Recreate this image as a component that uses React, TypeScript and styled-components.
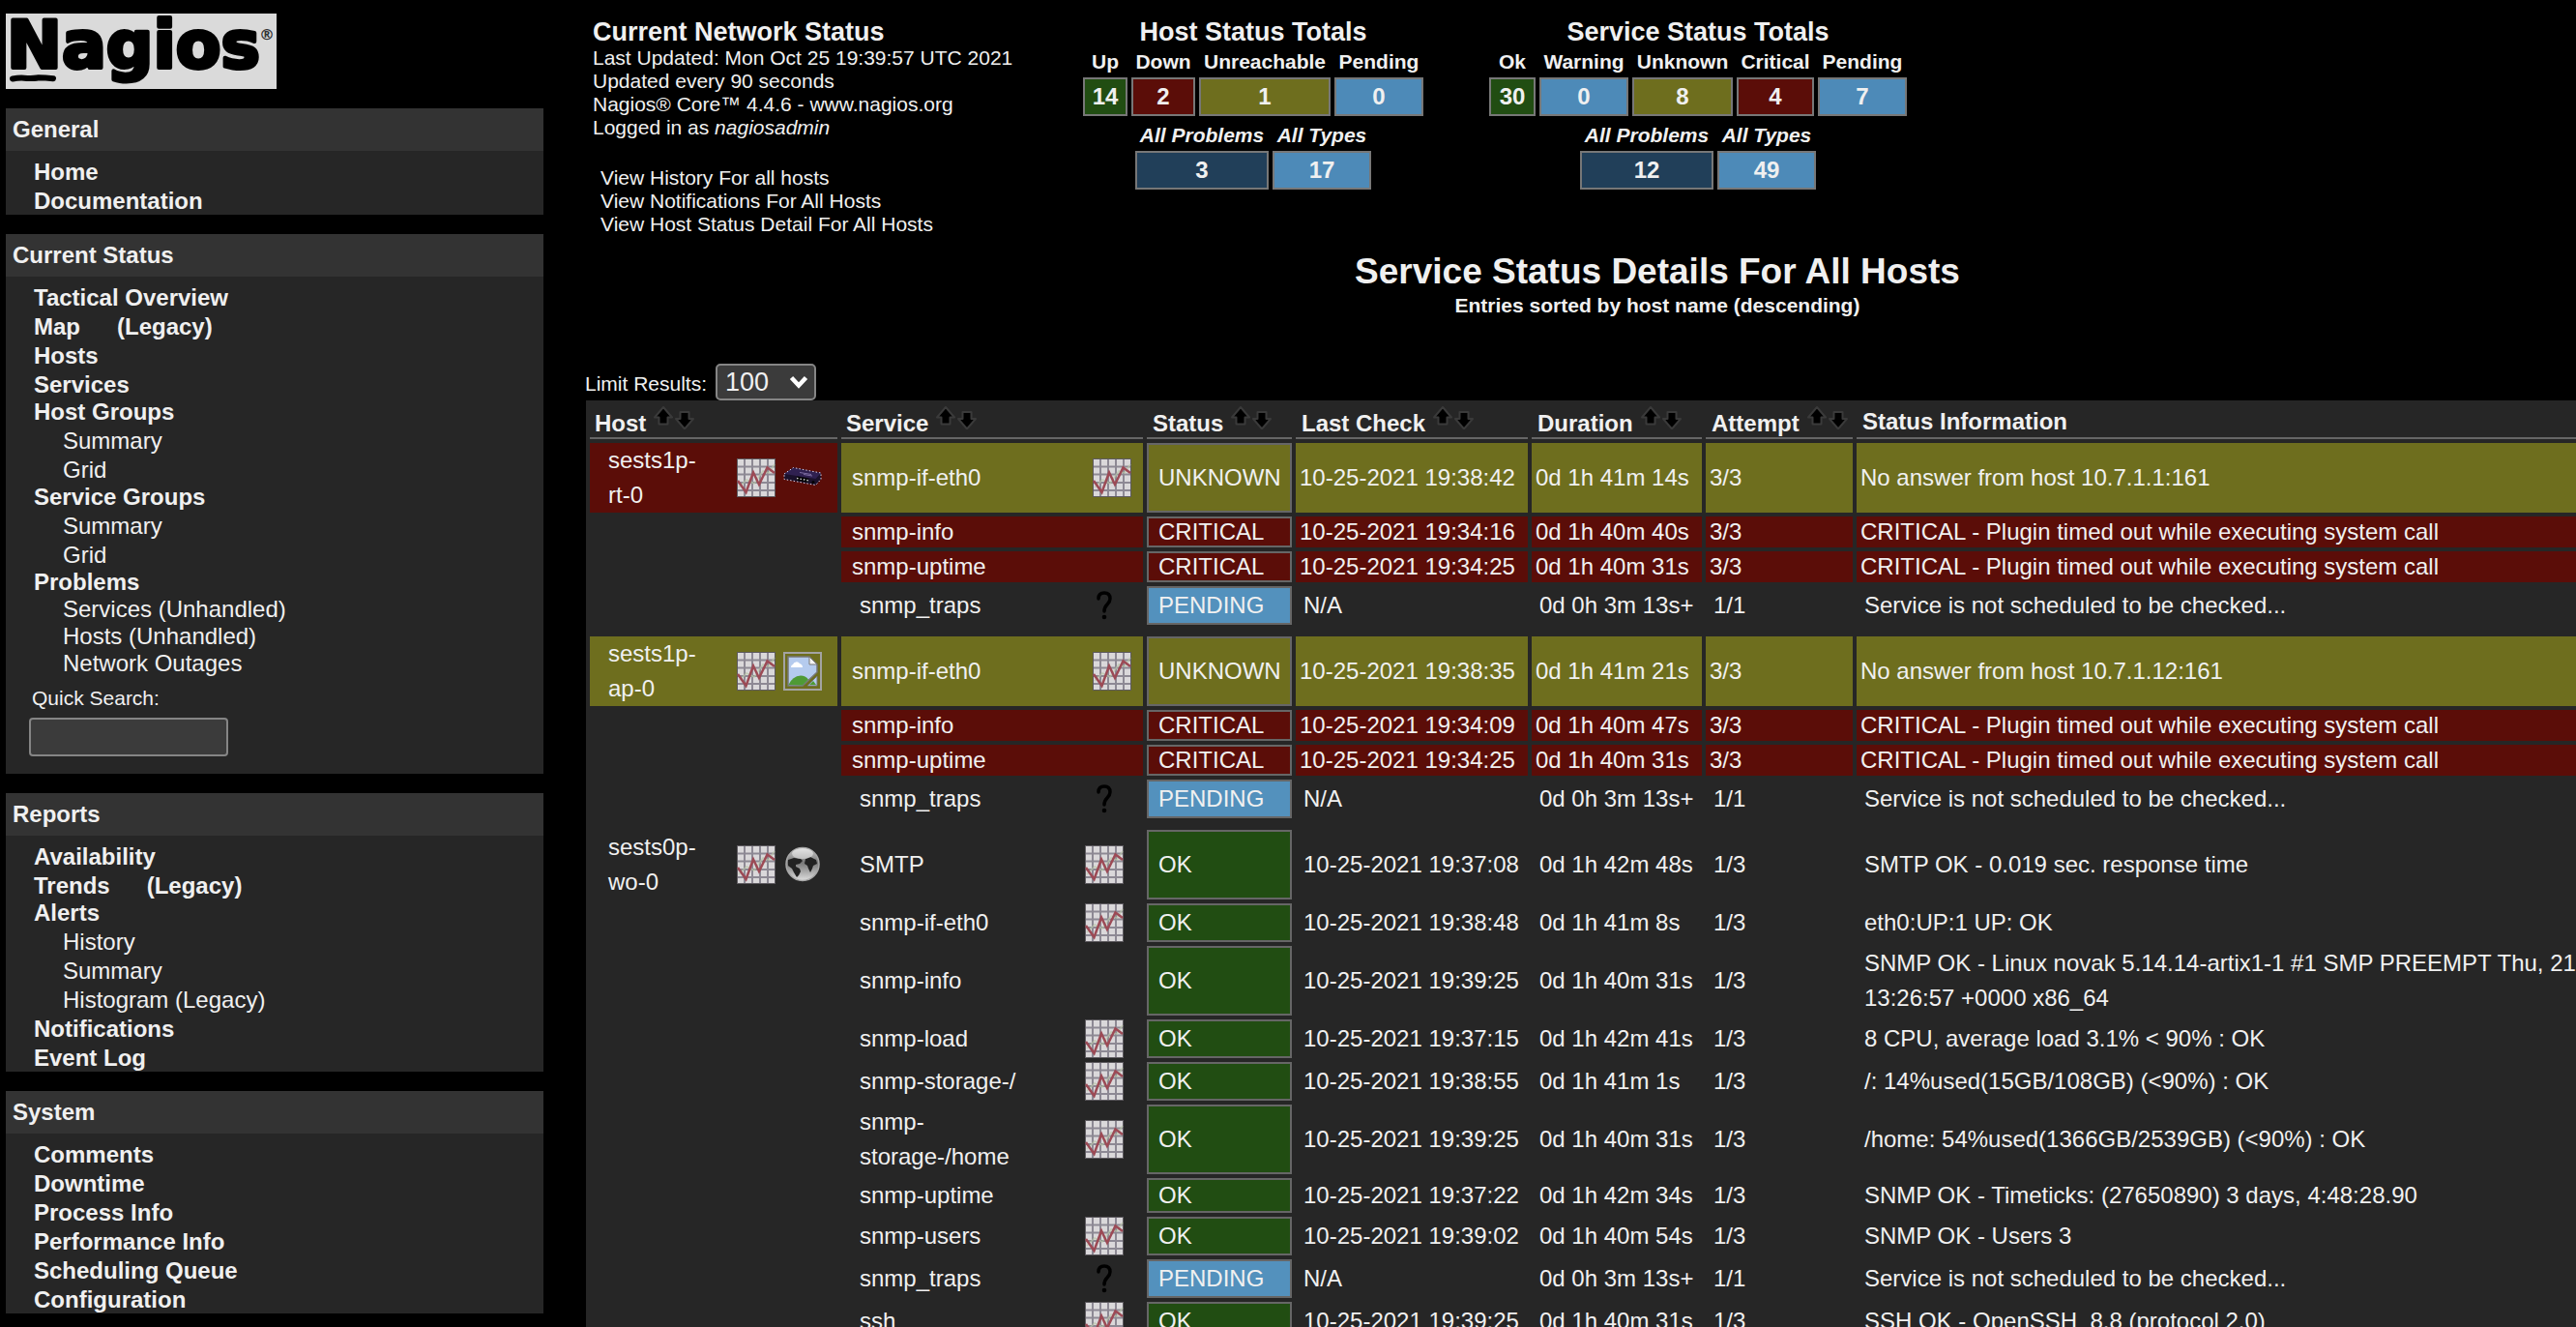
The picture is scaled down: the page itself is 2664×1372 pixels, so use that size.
import React from "react";
import styled, { createGlobalStyle, css } from "styled-components";

const c = {
  page: "#000000",
  panel: "#262626",
  panelHead: "#333333",
  text: "#f0f0f0",
  line: "#666666",
  boxLine: "#777777",
  control: "#3b3b3b",
  controlLine: "#858585",
  green: "#214d12",
  red: "#5b0d08",
  olive: "#6e6e1e",
  blue: "#4d8ab8",
  pending: "#5391bd",
  navy: "#213f59",
};

const GlobalStyle = createGlobalStyle`
  body {
    margin: 0;
    background: ${c.page};
    color: ${c.text};
    font-family: "Liberation Sans", Arial, Helvetica, sans-serif;
    font-size: 24px;
  }
  a { color: inherit; text-decoration: none; }
  svg { display: block; flex: none; }
`;

const Page = styled.div`
  display: flex;
  gap: 42px;
  height: 100vh;
  overflow: hidden;
  padding-left: 6px;
`;

/* ---------- sidebar ---------- */

const Sidebar = styled.nav`
  display: flex;
  flex-direction: column;
  gap: 20px;
  flex: 0 0 556px;
  padding-top: 14px;
`;

const Panel = styled.section`
  background: ${c.panel};
`;

const PanelTitle = styled.h2`
  margin: 0;
  padding-left: 7px;
  background: ${c.panelHead};
  font-size: 24px;
  line-height: 44px;
`;

const Menu = styled.ul`
  margin: 0;
  padding: 6px 0 0 29px;
  list-style: none;
  font-weight: bold;
`;

const SubMenu = styled.ul`
  margin: 0;
  padding: 0 0 0 30px;
  list-style: none;
  font-weight: normal;
`;

const MenuLine = styled.div<{ $tight?: boolean }>`
  display: flex;
  gap: 38px;
  padding-top: ${(p) => (p.$tight ? 0 : 2)}px;
  line-height: 28px;
`;

const SearchForm = styled.form`
  display: flex;
  flex-direction: column;
  align-items: flex-start;
  gap: 8px;
  padding: 10px 24px 18px;
`;

const SearchLabel = styled.label`
  padding-left: 3px;
  font-size: 21px;
  line-height: 24px;
`;

const SearchInput = styled.input`
  box-sizing: border-box;
  width: 206px;
  height: 40px;
  padding: 0 6px;
  border: 2px solid ${c.controlLine};
  border-radius: 4px;
  background: ${c.control};
  color: ${c.text};
  font: inherit;
`;

type Item = { label: string; legacy?: boolean; tight?: boolean; subTight?: boolean; sub?: string[] };

const general: Item[] = [{ label: "Home" }, { label: "Documentation" }];
const current: Item[] = [
  { label: "Tactical Overview" },
  { label: "Map", legacy: true },
  { label: "Hosts" },
  { label: "Services" },
  { label: "Host Groups", tight: true, sub: ["Summary", "Grid"] },
  { label: "Service Groups", tight: true, sub: ["Summary", "Grid"] },
  {
    label: "Problems",
    tight: true,
    subTight: true,
    sub: ["Services (Unhandled)", "Hosts (Unhandled)", "Network Outages"],
  },
];
const reports: Item[] = [
  { label: "Availability" },
  { label: "Trends", legacy: true },
  { label: "Alerts", tight: true, sub: ["History", "Summary", "Histogram (Legacy)"] },
  { label: "Notifications" },
  { label: "Event Log" },
];
const system: Item[] = [
  { label: "Comments" },
  { label: "Downtime" },
  { label: "Process Info" },
  { label: "Performance Info" },
  { label: "Scheduling Queue" },
  { label: "Configuration" },
];

function NavPanel({ title, items, children }: { title: string; items: Item[]; children?: React.ReactNode }) {
  return (
    <Panel>
      <PanelTitle>{title}</PanelTitle>
      <Menu>
        {items.map((it) => (
          <li key={it.label}>
            <MenuLine $tight={it.tight}>
              <a href="#">{it.label}</a>
              {it.legacy && <a href="#">(Legacy)</a>}
            </MenuLine>
            {it.sub && (
              <SubMenu>
                {it.sub.map((s) => (
                  <li key={s}>
                    <MenuLine $tight={it.subTight}>
                      <a href="#">{s}</a>
                    </MenuLine>
                  </li>
                ))}
              </SubMenu>
            )}
          </li>
        ))}
      </Menu>
      {children}
    </Panel>
  );
}

const LogoSvg = styled.svg`
  overflow: visible;
`;

function Logo() {
  return (
    <LogoSvg width="280" height="78" viewBox="0 0 280 78" role="img" aria-label="Nagios">
      <rect width="280" height="78" fill="#dadada" />
      <g fill="#000" stroke="#000" strokeLinejoin="round" fontFamily="'DejaVu Sans', sans-serif" fontWeight="bold">
        <text x="1" y="56" fontSize="68" strokeWidth="4">
          Nagios
        </text>
        <text x="262" y="27" fontSize="16" strokeWidth="0" fill="#333">
          ®
        </text>
      </g>
      <path
        d="M7 67.500q8-1.500 15-.5q8 0 12-.8q7 0 15 1"
        fill="none"
        stroke="#000"
        strokeWidth="6"
        strokeLinecap="round"
      />
    </LogoSvg>
  );
}

/* ---------- summary area ---------- */

const Main = styled.main`
  flex: 1;
  min-width: 0;
  overflow: hidden;
`;

/* The frame's content runs a little past the right edge of the window. */
const Content = styled.div`
  width: calc(100% + 160px);
  padding-top: 18px;
`;

const Summary = styled.div`
  display: flex;
  align-items: flex-start;
  gap: 60px;
`;

const Info = styled.div`
  box-sizing: border-box;
  flex: 0 0 452px;
  padding-left: 9px;
  font-size: 21px;
  line-height: 24px;
  white-space: nowrap;
`;

const BlockTitle = styled.h3`
  margin: 0;
  font-size: 27px;
  line-height: 30px;
`;

const ViewLinks = styled.div`
  display: flex;
  flex-direction: column;
  align-items: flex-start;
  padding: 28px 0 0 8px;
`;

const Totals = styled.div`
  text-align: center;
`;

const TotalsTable = styled.table`
  margin: 0 auto;
  border-spacing: 4px;
  table-layout: fixed;
`;

const TotalsCol = styled.col<{ $w: number }>`
  width: ${(p) => p.$w}px;
`;

const TotalsHead = styled.th<{ $italic?: boolean }>`
  padding: 0;
  font-size: 21px;
  line-height: 24px;
  font-style: ${(p) => (p.$italic ? "italic" : "normal")};
  white-space: nowrap;
`;

const TotalsCell = styled.td<{ $bg: string }>`
  padding: 0;
  border: 2px solid ${c.boxLine};
  background: ${(p) => p.$bg};
  font-weight: bold;
  line-height: 36px;
`;

type Total = [label: string, value: number, width: number, bg: string];

function TotalsGrid({ cells, italic }: { cells: Total[]; italic?: boolean }) {
  const width = cells.reduce((n, x) => n + x[2] + 4, 4);
  return (
    <TotalsTable style={{ width }}>
      <colgroup>
        {cells.map(([label, , w]) => (
          <TotalsCol key={label} $w={w} />
        ))}
      </colgroup>
      <thead>
        <tr>
          {cells.map(([label]) => (
            <TotalsHead key={label} $italic={italic} scope="col">
              <a href="#">{label}</a>
            </TotalsHead>
          ))}
        </tr>
      </thead>
      <tbody>
        <tr>
          {cells.map(([label, value, , bg]) => (
            <TotalsCell key={label} $bg={bg}>
              {value}
            </TotalsCell>
          ))}
        </tr>
      </tbody>
    </TotalsTable>
  );
}

const PageTitle = styled.h1`
  margin: 16px 0 2px;
  font-size: 37px;
  line-height: 42px;
  text-align: center;
`;

const PageSubtitle = styled.div`
  font-size: 21px;
  font-weight: bold;
  line-height: 24px;
  text-align: center;
`;

const LimitRow = styled.div`
  display: flex;
  align-items: baseline;
  gap: 9px;
  margin-top: 48px;
  padding-left: 1px;
  font-size: 21px;
`;

const SelectBox = styled.span`
  position: relative;
  display: flex;
`;

const Select = styled.select`
  box-sizing: border-box;
  appearance: none;
  width: 104px;
  height: 38px;
  padding: 0 8px;
  border: 2px solid ${c.controlLine};
  border-radius: 5px;
  background: ${c.control};
  color: ${c.text};
  font-family: inherit;
  font-size: 27px;
`;

const SelectArrow = styled.svg`
  position: absolute;
  right: 7px;
  top: 11px;
  pointer-events: none;
`;

/* ---------- service table ---------- */

type Status = "OK" | "UNKNOWN" | "CRITICAL" | "PENDING";

const statusBg: Record<Status, string> = {
  OK: c.green,
  UNKNOWN: c.olive,
  CRITICAL: c.red,
  PENDING: c.pending,
};

const StatusTable = styled.table`
  width: calc(100% - 4px);
  margin-left: 2px;
  border-spacing: 4px;
  table-layout: fixed;
  background: ${c.panel};
`;

const Col = styled.col<{ $w?: number }>`
  ${(p) => p.$w && css`width: ${p.$w}px;`}
`;

const HeadCell = styled.th`
  padding: 0 5px;
  border-bottom: 2px solid ${c.line};
  text-align: left;
  vertical-align: top;

  &:nth-child(n + 3) {
    padding-left: 6px;
  }
`;

const HeadInner = styled.div<{ $sortable?: boolean }>`
  display: flex;
  align-items: flex-start;
  box-sizing: border-box;
  height: 34px;
  padding-top: ${(p) => (p.$sortable ? 6 : 4)}px;
  line-height: 28px;
`;

const SortLinks = styled.span`
  display: flex;
  align-self: flex-start;
  margin: -4px 0 0 7px;
`;

const Cell = styled.td<{ $state?: Status }>`
  padding: 0 4px 0 ${(p) => (p.$state ? 4 : 8)}px;
  background: ${(p) => (p.$state ? statusBg[p.$state] : "transparent")};
  line-height: ${(p) => (p.$state === "CRITICAL" ? 32 : 36)}px;
  white-space: nowrap;
`;

const HostCell = styled(Cell)`
  padding: 0 16px 0 19px;
  line-height: 36px;
  white-space: normal;
`;

const ServiceCell = styled(Cell)`
  padding: 0 ${(p) => (p.$state ? 12 : 20)}px 0 ${(p) => (p.$state ? 11 : 19)}px;
  white-space: normal;
`;

const StatusCell = styled.td<{ $status: Status }>`
  padding: 0 4px 0 10px;
  border: 2px solid ${c.line};
  background: ${(p) => statusBg[p.$status]};
  line-height: 28px;
`;

const NameRow = styled.div`
  display: flex;
  align-items: center;
  justify-content: space-between;
`;

const HostName = styled.a`
  width: 100px;
`;

const ServiceName = styled.a`
  max-width: 200px;
`;

const HostIcons = styled.span`
  display: flex;
  gap: 8px;
`;

const GapCell = styled.td`
  height: 4px;
  padding: 0;
`;

function SortArrow({ down }: { down?: boolean }) {
  return (
    <svg width="22" height="24" viewBox="0 0 22 24">
      <path
        d={down ? "M6.500 6h9v7h4.500l-9 10.500-9-10.500h4.500z" : "M6.500 18.500v-7H2l9-10.500 9 10.500h-4.500v7z"}
        fill="#000"
        stroke="#3a3a3a"
        strokeWidth="2"
        strokeLinejoin="round"
      />
    </svg>
  );
}

function GraphIcon() {
  return (
    <svg width="40" height="40" viewBox="0 0 40 40">
      <rect x="0.500" y="0.500" width="39" height="39" fill="#dad8da" stroke="#5d5a5f" />
      <path
        d="M8 1v38M16 1v38M24 1v38M32 1v38M1 8.500h38M1 16.500h38M1 25h38M1 33h38"
        stroke="#8d8994"
        strokeWidth="2"
      />
      <path d="M2 30l8-8 8 4 9-13 6 2 6-9" fill="none" stroke="#b9c7a8" strokeWidth="1.500" opacity="0.700" />
      <path d="M1 23l8.500 12L17 14.500 23 27 31.500 9.500 39 15" fill="none" stroke="#9c4a55" strokeWidth="2.500" />
    </svg>
  );
}

function RouterIcon() {
  return (
    <svg width="40" height="40" viewBox="0 0 40 40">
      <path d="M1 16l9.500-6.500L39 15v6.500L33.500 27.500 1 21.500z" fill="#1a112b" />
      <path d="M1 16l9.500-6.500L39 15l-5.500 6z" fill="#2f2050" />
      <path
        d="M1 16l9.500-6.500L39 15v6.500L33.500 27.500 1 21.500z"
        fill="none"
        stroke="#d8cfe6"
        strokeDasharray="1.500 2"
      />
      <path d="M17 14.500l12 2M21 16.500l9 1.500" stroke="#7c6ca0" />
      <path d="M14 20.500l12 2.200" stroke="#000" strokeWidth="4" />
      <path d="M14 20.500l12 2.200" stroke="#cfcfcf" strokeWidth="1.500" strokeDasharray="1.500 2" />
      <circle cx="31" cy="24.500" r="1.500" fill="#000" />
    </svg>
  );
}

function MissingImageIcon() {
  return (
    <svg width="40" height="40" viewBox="0 0 40 40">
      <rect x="1" y="1" width="38" height="38" fill="none" stroke="#a3a3a3" strokeWidth="2" />
      <path d="M5 5h22l8 8v8L20 35H5z" fill="#b5cbee" stroke="#777" strokeWidth="1.500" />
      <path d="M35 25v10H25z" fill="#b5cbee" stroke="#777" />
      <path d="M27 5v8h8z" fill="#f4f4f4" stroke="#777" />
      <path d="M8 16a3 3 0 0 1 2-3 4 4 0 0 1 7-1q3 1 3 4z" fill="#fff" />
      <path d="M5.500 34q4-9 12.500-9.500 5 0 8 4L20 34.500z" fill="#4f9a35" />
      <path d="M27 34l4-4 3 4z" fill="#4f9a35" />
    </svg>
  );
}

function GlobeIcon() {
  return (
    <svg width="40" height="40" viewBox="0 0 40 40">
      <defs>
        <linearGradient id="globe" x1="0" y1="0" x2="0" y2="1">
          <stop offset="0" stopColor="#cfcfcf" />
          <stop offset="0.450" stopColor="#777" />
          <stop offset="1" stopColor="#dedede" />
        </linearGradient>
      </defs>
      <circle cx="20" cy="19.500" r="17" fill="url(#globe)" stroke="#a8a8a8" strokeWidth="1.500" />
      <path d="M5 15l6-2 7 1 2 2-3 3-4 1v2l4 2 1 3-2 4-2 2-3-5-2-4-4-3z" fill="#222" />
      <path d="M23 14l5-2 6 3 1 4-2 1-2 1-1 3-2 4-2-4-1-3-3-2z" fill="#222" />
      <ellipse cx="20" cy="8.500" rx="11" ry="5.500" fill="#fff" opacity="0.450" />
    </svg>
  );
}

function UnknownIcon() {
  return (
    <svg width="40" height="40" viewBox="0 0 40 40">
      <path
        d="M14 13q0-6 6-6t6 6q0 3-3 6-3 3-3 7"
        fill="none"
        stroke="#000"
        strokeWidth="3.500"
        strokeLinecap="round"
      />
      <circle cx="20" cy="32" r="2.300" fill="#000" />
    </svg>
  );
}

type Row = {
  host?: string;
  hostState?: Status;
  hostIcon?: React.ReactNode;
  service: string;
  icon?: "graph" | "unknown";
  status: Status;
  check: string;
  duration: string;
  attempt: string;
  info: string[];
};

const timedOut = ["CRITICAL - Plugin timed out while executing system call"];
const notScheduled = ["Service is not scheduled to be checked..."];

const groups: Row[][] = [
  [
    { host: "sests1p-rt-0", hostState: "CRITICAL", hostIcon: <RouterIcon />, service: "snmp-if-eth0", icon: "graph", status: "UNKNOWN", check: "10-25-2021 19:38:42", duration: "0d 1h 41m 14s", attempt: "3/3", info: ["No answer from host 10.7.1.1:161"] },
    { service: "snmp-info", status: "CRITICAL", check: "10-25-2021 19:34:16", duration: "0d 1h 40m 40s", attempt: "3/3", info: timedOut },
    { service: "snmp-uptime", status: "CRITICAL", check: "10-25-2021 19:34:25", duration: "0d 1h 40m 31s", attempt: "3/3", info: timedOut },
    { service: "snmp_traps", icon: "unknown", status: "PENDING", check: "N/A", duration: "0d 0h 3m 13s+", attempt: "1/1", info: notScheduled },
  ],
  [
    { host: "sests1p-ap-0", hostState: "UNKNOWN", hostIcon: <MissingImageIcon />, service: "snmp-if-eth0", icon: "graph", status: "UNKNOWN", check: "10-25-2021 19:38:35", duration: "0d 1h 41m 21s", attempt: "3/3", info: ["No answer from host 10.7.1.12:161"] },
    { service: "snmp-info", status: "CRITICAL", check: "10-25-2021 19:34:09", duration: "0d 1h 40m 47s", attempt: "3/3", info: timedOut },
    { service: "snmp-uptime", status: "CRITICAL", check: "10-25-2021 19:34:25", duration: "0d 1h 40m 31s", attempt: "3/3", info: timedOut },
    { service: "snmp_traps", icon: "unknown", status: "PENDING", check: "N/A", duration: "0d 0h 3m 13s+", attempt: "1/1", info: notScheduled },
  ],
  [
    { host: "sests0p-wo-0", hostIcon: <GlobeIcon />, service: "SMTP", icon: "graph", status: "OK", check: "10-25-2021 19:37:08", duration: "0d 1h 42m 48s", attempt: "1/3", info: ["SMTP OK - 0.019 sec. response time"] },
    { service: "snmp-if-eth0", icon: "graph", status: "OK", check: "10-25-2021 19:38:48", duration: "0d 1h 41m 8s", attempt: "1/3", info: ["eth0:UP:1 UP: OK"] },
    { service: "snmp-info", status: "OK", check: "10-25-2021 19:39:25", duration: "0d 1h 40m 31s", attempt: "1/3", info: ["SNMP OK - Linux novak 5.14.14-artix1-1 #1 SMP PREEMPT Thu, 21", "13:26:57 +0000 x86_64"] },
    { service: "snmp-load", icon: "graph", status: "OK", check: "10-25-2021 19:37:15", duration: "0d 1h 42m 41s", attempt: "1/3", info: ["8 CPU, average load 3.1% < 90% : OK"] },
    { service: "snmp-storage-/", icon: "graph", status: "OK", check: "10-25-2021 19:38:55", duration: "0d 1h 41m 1s", attempt: "1/3", info: ["/: 14%used(15GB/108GB) (<90%) : OK"] },
    { service: "snmp-storage-/home", icon: "graph", status: "OK", check: "10-25-2021 19:39:25", duration: "0d 1h 40m 31s", attempt: "1/3", info: ["/home: 54%used(1366GB/2539GB) (<90%) : OK"] },
    { service: "snmp-uptime", status: "OK", check: "10-25-2021 19:37:22", duration: "0d 1h 42m 34s", attempt: "1/3", info: ["SNMP OK - Timeticks: (27650890) 3 days, 4:48:28.90"] },
    { service: "snmp-users", icon: "graph", status: "OK", check: "10-25-2021 19:39:02", duration: "0d 1h 40m 54s", attempt: "1/3", info: ["SNMP OK - Users 3"] },
    { service: "snmp_traps", icon: "unknown", status: "PENDING", check: "N/A", duration: "0d 0h 3m 13s+", attempt: "1/1", info: notScheduled },
    { service: "ssh", icon: "graph", status: "OK", check: "10-25-2021 19:39:25", duration: "0d 1h 40m 31s", attempt: "1/3", info: ["SSH OK - OpenSSH_8.8 (protocol 2.0)"] },
  ],
];

function ServiceRow({ row }: { row: Row }) {
  const state = row.status === "UNKNOWN" || row.status === "CRITICAL" ? row.status : undefined;
  return (
    <tr>
      {row.host ? (
        <HostCell $state={row.hostState}>
          <NameRow>
            <HostName href="#">{row.host}</HostName>
            <HostIcons>
              <GraphIcon />
              {row.hostIcon}
            </HostIcons>
          </NameRow>
        </HostCell>
      ) : (
        <td />
      )}
      <ServiceCell $state={state}>
        <NameRow>
          <ServiceName href="#">{row.service}</ServiceName>
          {row.icon === "graph" && <GraphIcon />}
          {row.icon === "unknown" && <UnknownIcon />}
        </NameRow>
      </ServiceCell>
      <StatusCell $status={row.status}>{row.status}</StatusCell>
      <Cell $state={state}>{row.check}</Cell>
      <Cell $state={state}>{row.duration}</Cell>
      <Cell $state={state}>{row.attempt}</Cell>
      <Cell $state={state}>
        {row.info.map((line, i) => (
          <div key={i}>{line}</div>
        ))}
      </Cell>
    </tr>
  );
}

const sortable = ["Host", "Service", "Status", "Last Check", "Duration", "Attempt"];

export default function App() {
  return (
    <>
      <GlobalStyle />
      <Page>
        <Sidebar>
          <Logo />
          <NavPanel title="General" items={general} />
          <NavPanel title="Current Status" items={current}>
            <SearchForm>
              <SearchLabel htmlFor="quick-search">Quick Search:</SearchLabel>
              <SearchInput id="quick-search" type="text" />
            </SearchForm>
          </NavPanel>
          <NavPanel title="Reports" items={reports} />
          <NavPanel title="System" items={system} />
        </Sidebar>

        <Main>
          <Content>
            <Summary>
              <Info>
                <BlockTitle>Current Network Status</BlockTitle>
                <div>Last Updated: Mon Oct 25 19:39:57 UTC 2021</div>
                <div>Updated every 90 seconds</div>
                <div>
                  Nagios® Core™ 4.4.6 - <a href="#">www.nagios.org</a>
                </div>
                <div>
                  Logged in as <i>nagiosadmin</i>
                </div>
                <ViewLinks>
                  <a href="#">View History For all hosts</a>
                  <a href="#">View Notifications For All Hosts</a>
                  <a href="#">View Host Status Detail For All Hosts</a>
                </ViewLinks>
              </Info>
              <Totals>
                <BlockTitle>Host Status Totals</BlockTitle>
                <TotalsGrid
                  cells={[
                    ["Up", 14, 46, c.green],
                    ["Down", 2, 66, c.red],
                    ["Unreachable", 1, 136, c.olive],
                    ["Pending", 0, 92, c.blue],
                  ]}
                />
                <TotalsGrid
                  italic
                  cells={[
                    ["All Problems", 3, 138, c.navy],
                    ["All Types", 17, 102, c.blue],
                  ]}
                />
              </Totals>
              <Totals>
                <BlockTitle>Service Status Totals</BlockTitle>
                <TotalsGrid
                  cells={[
                    ["Ok", 30, 48, c.green],
                    ["Warning", 0, 92, c.blue],
                    ["Unknown", 8, 104, c.olive],
                    ["Critical", 4, 80, c.red],
                    ["Pending", 7, 92, c.blue],
                  ]}
                />
                <TotalsGrid
                  italic
                  cells={[
                    ["All Problems", 12, 138, c.navy],
                    ["All Types", 49, 102, c.blue],
                  ]}
                />
              </Totals>
            </Summary>

            <PageTitle>Service Status Details For All Hosts</PageTitle>
            <PageSubtitle>Entries sorted by host name (descending)</PageSubtitle>

            <LimitRow>
              <label htmlFor="limit">Limit Results:</label>
              <SelectBox>
                <Select id="limit" defaultValue="100">
                  <option>50</option>
                  <option>100</option>
                  <option>250</option>
                  <option>1000</option>
                  <option>All</option>
                </Select>
                <SelectArrow width="22" height="16" viewBox="0 0 22 16">
                  <path d="M3.500 3.500L11 11.500l7.500-8" fill="none" stroke="#fff" strokeWidth="4.500" />
                </SelectArrow>
              </SelectBox>
            </LimitRow>

            <StatusTable>
              <colgroup>
                <Col $w={256} />
                <Col $w={312} />
                <Col $w={150} />
                <Col $w={240} />
                <Col $w={176} />
                <Col $w={152} />
                <Col />
              </colgroup>
              <thead>
                <tr>
                  {sortable.map((name) => (
                    <HeadCell key={name} scope="col">
                      <HeadInner $sortable>
                        {name}
                        <SortLinks>
                          <a href="#" aria-label={`Sort by ${name}, ascending`}>
                            <SortArrow />
                          </a>
                          <a href="#" aria-label={`Sort by ${name}, descending`}>
                            <SortArrow down />
                          </a>
                        </SortLinks>
                      </HeadInner>
                    </HeadCell>
                  ))}
                  <HeadCell scope="col">
                    <HeadInner>Status Information</HeadInner>
                  </HeadCell>
                </tr>
              </thead>
              {groups.map((rows, g) => (
                <tbody key={g}>
                  {g > 0 && (
                    <tr>
                      <GapCell colSpan={7} />
                    </tr>
                  )}
                  {rows.map((row) => (
                    <ServiceRow key={row.service} row={row} />
                  ))}
                </tbody>
              ))}
            </StatusTable>
          </Content>
        </Main>
      </Page>
    </>
  );
}
